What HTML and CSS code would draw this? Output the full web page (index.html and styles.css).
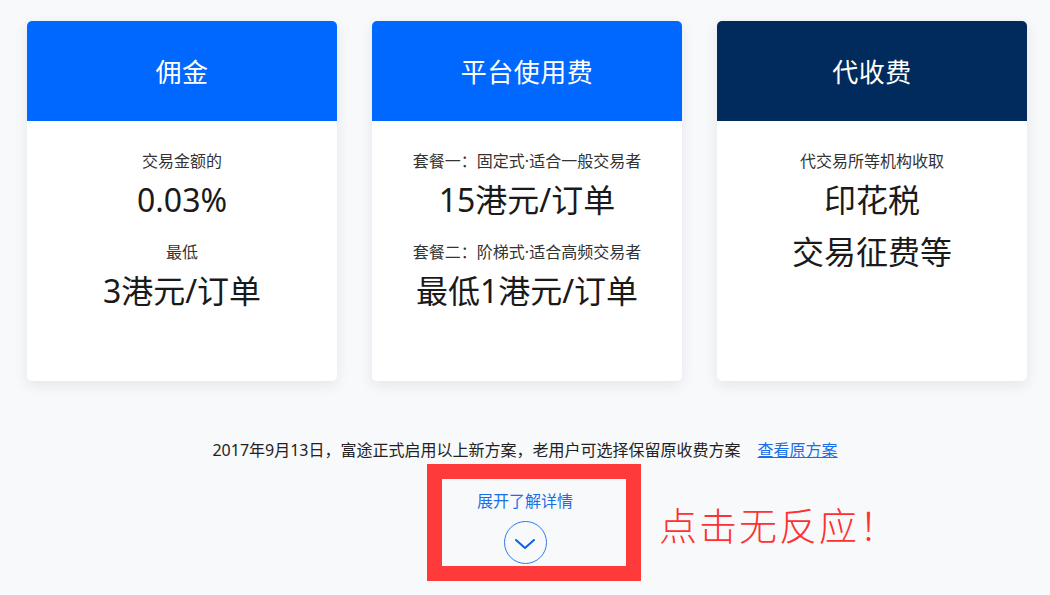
FILE: index.html
```html
<!DOCTYPE html>
<html lang="zh-CN">
<head>
<meta charset="utf-8">
<title>收费方案</title>
<link rel="stylesheet" href="styles.css">
</head>
<body>
<div class="page">
  <div class="cards">
    <div class="card">
      <div class="card-head blue">佣金</div>
      <div class="card-body">
        <div class="label">交易金额的</div>
        <div class="value">0.03%</div>
        <div class="label gap">最低</div>
        <div class="value">3港元/订单</div>
      </div>
    </div>
    <div class="card">
      <div class="card-head blue">平台使用费</div>
      <div class="card-body">
        <div class="label">套餐一：固定式·适合一般交易者</div>
        <div class="value">15港元/订单</div>
        <div class="label gap">套餐二：阶梯式·适合高频交易者</div>
        <div class="value">最低1港元/订单</div>
      </div>
    </div>
    <div class="card">
      <div class="card-head navy">代收费</div>
      <div class="card-body">
        <div class="label">代交易所等机构收取</div>
        <div class="value">印花税</div>
        <div class="value">交易征费等</div>
      </div>
    </div>
  </div>

  <p class="note">2017年9月13日，富途正式启用以上新方案，老用户可选择保留原收费方案<a class="note-link" href="#">查看原方案</a></p>

  <div class="expand">
    <span class="expand-text">展开了解详情</span>
    <span class="expand-btn">
      <svg width="20" height="10" viewBox="0 0 20 10"><path d="M1 1 L10 9 L19 1" fill="none" stroke="#0a63e6" stroke-width="2" stroke-linecap="round" stroke-linejoin="round"/></svg>
    </span>
  </div>

  <div class="annot-box"></div>
  <div class="annot-text">点击无反应！</div>
</div>
</body>
</html>
```

FILE: styles.css
```css
* { box-sizing: border-box; }
html, body {
  margin: 0;
  padding: 0;
  background: #f8f9fb;
}
body {
  font-family: "Noto Sans", "Noto Sans CJK SC", sans-serif;
  color: #222;
}
.page {
  position: relative;
  width: 1050px;
  height: 595px;
  overflow: hidden;
  padding: 21px 23px 0 27px;
}
.cards {
  display: flex;
  gap: 35px;
}
.card {
  width: 310px;
  height: 360px;
  background: #fff;
  border-radius: 5px;
  overflow: hidden;
  box-shadow: 0 4px 14px rgba(20, 30, 60, 0.09);
}
.card-head {
  height: 100px;
  display: flex;
  align-items: center;
  justify-content: center;
  color: #fff;
  font-size: 26px;
  letter-spacing: 0.5px;
}
.card-head.blue { background: #0068ff; }
.card-head.navy { background: #002b5c; }
.card-body {
  padding-top: 28px;
  text-align: center;
}
.label {
  font-size: 16px;
  line-height: 24px;
  color: #333;
}
.label.gap { margin-top: 14px; }
.value {
  font-size: 32px;
  line-height: 52px;
  color: #1a1a1a;
  margin-top: 1px;
}
.value + .value { margin-top: 0; }
.note {
  margin: 57px 0 0;
  text-align: center;
  font-size: 16px;
  line-height: 24px;
  color: #222;
  padding-right: 4px;
}
.note-link {
  margin-left: 17px;
  color: #1a6fe8;
  text-decoration: underline;
}
.expand {
  margin-top: 29px;
  display: flex;
  flex-direction: column;
  align-items: center;
  padding-right: 4px;
}
.expand-text {
  font-size: 16px;
  line-height: 20px;
  color: #1a6fe8;
}
.expand-btn {
  margin-top: 10px;
  width: 43px;
  height: 43px;
  border: 1px solid #2a7af0;
  border-radius: 50%;
  display: flex;
  align-items: center;
  justify-content: center;
  padding-top: 2px;
}
.annot-box {
  position: absolute;
  left: 427px;
  top: 464px;
  width: 214px;
  height: 117px;
  border: 15px solid #ff3a3a;
}
.annot-text {
  position: absolute;
  left: 659px;
  top: 500px;
  font-size: 38px;
  line-height: 50px;
  color: #ff3030;
  font-weight: 300;
  letter-spacing: 2px;
}
```
